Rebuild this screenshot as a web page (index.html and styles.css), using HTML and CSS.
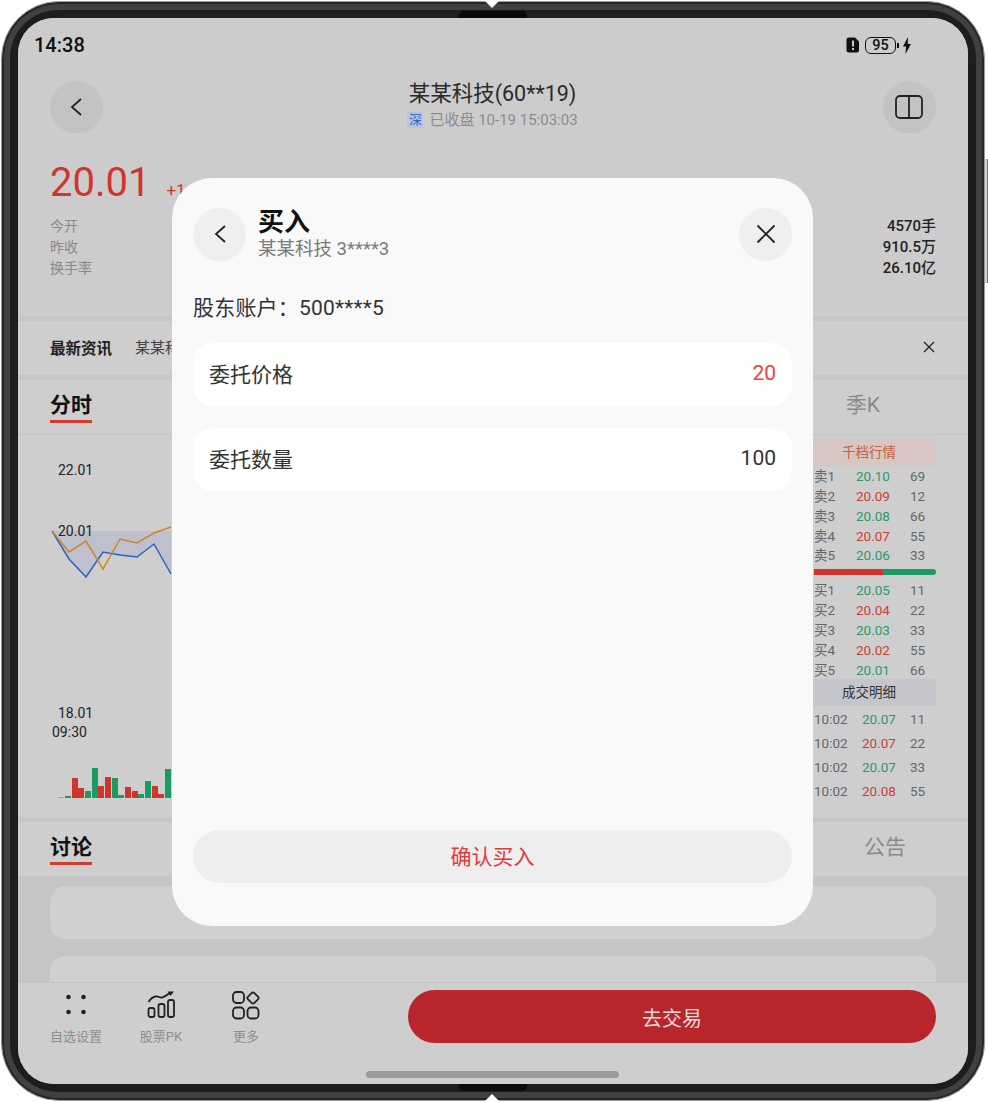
FILE: index.html
```html
<!DOCTYPE html>
<html lang="zh-CN">
<head>
    <meta charset="UTF-8">
    <meta name="viewport" content="width=device-width, initial-scale=1.0">
    <title>买入</title>
    <link rel="stylesheet" href="styles.css">
</head>
<body>
    <div class="phone">
        <span class="side-key"></span>
        <span class="hinge hinge-top"></span>
        <span class="hinge hinge-bottom"></span>
        <span class="notch notch-top"></span>
        <span class="notch notch-bottom"></span>
        <div class="bezel">
            <div class="screen">
                <div class="status">
                    <span class="time">14:38</span>
                    <div class="status-icons">
                        <svg width="14" height="16" viewBox="0 0 14 16">
                            <path d="M3 .5h6l4 4V13a2.500 2.500 0 0 1-2.500 2.500h-7.500A2.500 2.500 0 0 1 .5 13V3A2.500 2.500 0 0 1 3 .5z" fill="#111"/>
                            <path d="M7 3.500v6M7 11v2" stroke="#ccc" stroke-width="2"/>
                        </svg>
                        <span class="battery">95</span>
                        <span class="battery-nub"></span>
                        <svg class="bolt" width="8" height="17" viewBox="0 0 8 17">
                            <path d="M5 0 0 9.500h3L2.500 17 8 7H4.800z" fill="#111"/>
                        </svg>
                    </div>
                </div>

                <div class="header">
                    <button class="round-btn dim">
                        <svg width="24" height="24" viewBox="0 0 24 24"><path d="M17 4 8 12l9 8" class="icon-line"/></svg>
                    </button>
                    <div class="header-title">
                        <div class="stock-name">某某科技(60**19)</div>
                        <div class="stock-sub"><span class="market-tag">深</span>已收盘 10-19 15:03:03</div>
                    </div>
                    <button class="round-btn dim">
                        <svg width="30" height="24" viewBox="0 0 30 24">
                            <rect x="2" y="1" width="26" height="22" rx="4" class="icon-line"/>
                            <path d="M15 1v22" class="icon-line"/>
                        </svg>
                    </button>
                </div>

                <div class="quote">
                    <div class="price-line">
                        <span class="price">20.01</span>
                        <span class="change">+1.23</span>
                    </div>
                    <div class="stat-row"><span>今开</span><b>4570手</b></div>
                    <div class="stat-row"><span>昨收</span><b>910.5万</b></div>
                    <div class="stat-row"><span>换手率</span><b>26.10亿</b></div>
                </div>

                <div class="news">
                    <b>最新资讯</b>
                    <span class="news-text">某某科技发布最新公告</span>
                    <svg width="14" height="14" viewBox="0 0 14 14"><path d="M2 2l10 10M12 2 2 12" class="icon-line thin"/></svg>
                </div>

                <div class="tabs chart-tabs">
                    <span class="tab active">分时</span>
                    <span class="tab">季K</span>
                </div>

                <div class="market">
                    <svg class="chart" width="796" height="382" viewBox="18 434 796 382">
                        <polygon points="52,530 69,558 86,576 103,551 120,554 137,556 154,543 171,573 171,530" fill="#bfc0cd"/>
                        <polyline points="52,530 69,558 86,576 103,551 120,554 137,556 154,543 171,573" fill="none" stroke="#2a62c4" stroke-width="1.500"/>
                        <polyline points="52,530 69,551 86,540 103,568 120,538 137,542 154,532 171,526" fill="none" stroke="#cf8526" stroke-width="1.500"/>
                        <text x="58" y="473.500">22.01</text>
                        <text x="58" y="534.500">20.01</text>
                        <text x="58" y="716.500">18.01</text>
                        <text x="52" y="735.500">09:30</text>
                        <g fill="#1b9a62">
                            <rect x="58" y="796" width="6" height="1" fill="#7fb79c"/>
                            <rect x="65" y="795" width="6" height="2"/>
                            <rect x="85" y="790" width="6" height="7"/>
                            <rect x="92" y="767" width="6" height="30"/>
                            <rect x="112" y="777" width="6" height="20"/>
                            <rect x="118" y="794" width="6" height="3"/>
                            <rect x="138" y="793" width="6" height="4"/>
                            <rect x="145" y="780" width="6" height="17"/>
                            <rect x="165" y="768" width="6" height="29"/>
                        </g>
                        <g fill="#cf352c">
                            <rect x="72" y="777" width="6" height="20"/>
                            <rect x="78" y="787" width="6" height="10"/>
                            <rect x="98" y="785" width="6" height="12"/>
                            <rect x="105" y="776" width="6" height="21"/>
                            <rect x="125" y="786" width="6" height="11"/>
                            <rect x="132" y="790" width="6" height="7"/>
                            <rect x="152" y="785" width="6" height="12"/>
                            <rect x="158" y="793" width="6" height="4"/>
                        </g>
                    </svg>

                    <div class="book">
                        <div class="book-title orange">千档行情</div>
                        <div class="book-row"><span>卖1</span><span class="up">20.10</span><span>69</span></div>
                        <div class="book-row"><span>卖2</span><span class="down">20.09</span><span>12</span></div>
                        <div class="book-row"><span>卖3</span><span class="up">20.08</span><span>66</span></div>
                        <div class="book-row"><span>卖4</span><span class="down">20.07</span><span>55</span></div>
                        <div class="book-row"><span>卖5</span><span class="up">20.06</span><span>33</span></div>
                        <div class="book-bar"><span class="book-bar-red"></span></div>
                        <div class="book-row"><span>买1</span><span class="up">20.05</span><span>11</span></div>
                        <div class="book-row"><span>买2</span><span class="down">20.04</span><span>22</span></div>
                        <div class="book-row"><span>买3</span><span class="up">20.03</span><span>33</span></div>
                        <div class="book-row"><span>买4</span><span class="down">20.02</span><span>55</span></div>
                        <div class="book-row"><span>买5</span><span class="up">20.01</span><span>66</span></div>
                        <div class="book-title grey">成交明细</div>
                        <div class="deals">
                            <div class="deal-row"><span>10:02</span><span class="up">20.07</span><span>11</span></div>
                            <div class="deal-row"><span>10:02</span><span class="down">20.07</span><span>22</span></div>
                            <div class="deal-row"><span>10:02</span><span class="up">20.07</span><span>33</span></div>
                            <div class="deal-row"><span>10:02</span><span class="down">20.08</span><span>55</span></div>
                        </div>
                    </div>
                </div>

                <div class="tabs talk-tabs">
                    <span class="tab active">讨论</span>
                    <span class="tab">公告</span>
                </div>

                <div class="talk-list">
                    <div class="talk-card"></div>
                    <div class="talk-card"></div>
                </div>

                <div class="bottom-bar">
                    <div class="tool tool-first">
                        <svg width="30" height="30" viewBox="0 0 30 30">
                            <circle cx="7.500" cy="7" r="2.300"/><circle cx="22.500" cy="7" r="2.300"/>
                            <circle cx="7.500" cy="22" r="2.300"/><circle cx="22.500" cy="22" r="2.300"/>
                        </svg>
                        <span>自选设置</span>
                    </div>
                    <div class="tool">
                        <svg width="30" height="30" viewBox="0 0 30 30">
                            <rect x="2.500" y="18" width="6" height="9" rx="2" class="icon-line"/>
                            <rect x="12.500" y="14" width="6" height="13" rx="2" class="icon-line"/>
                            <rect x="22" y="10" width="6" height="17" rx="2" class="icon-line"/>
                            <path d="M2.500 12c2-3 4-5 7-5.500 3-.5 4 1.500 6.500 1 2.500-.5 5-2.500 8-4.500" class="icon-line"/>
                            <path d="M21.500 1.500H28L24.500 6z" fill="#222"/>
                        </svg>
                        <span>股票PK</span>
                    </div>
                    <div class="tool">
                        <svg width="30" height="30" viewBox="0 0 30 30">
                            <rect x="2" y="2" width="11" height="11" rx="3.500" class="icon-line"/>
                            <rect x="17.500" y="3.500" width="9" height="9" rx="2" transform="rotate(45 22 8)" class="icon-line"/>
                            <rect x="2" y="17.500" width="11" height="11" rx="3.500" class="icon-line"/>
                            <rect x="16.500" y="17.500" width="11" height="11" rx="3.500" class="icon-line"/>
                        </svg>
                        <span>更多</span>
                    </div>
                    <button class="trade-btn">去交易</button>
                </div>
                <div class="home-bar"></div>

                <div class="modal">
                    <div class="modal-head">
                        <button class="round-btn light">
                            <svg width="24" height="24" viewBox="0 0 24 24"><path d="M17 4 8 12l9 8" class="icon-line"/></svg>
                        </button>
                        <div class="modal-title">
                            <h2>买入</h2>
                            <p>某某科技 3****3</p>
                        </div>
                        <button class="round-btn light">
                            <svg width="24" height="24" viewBox="0 0 24 24"><path d="M3.500 3.500l17 17M20.500 3.500l-17 17" class="icon-line"/></svg>
                        </button>
                    </div>
                    <div class="account">股东账户：500****5</div>
                    <div class="field"><span>委托价格</span><span class="field-red">20</span></div>
                    <div class="field"><span>委托数量</span><span>100</span></div>
                    <button class="confirm-btn">确认买入</button>
                </div>
            </div>
        </div>
    </div>
</body>
</html>
```

FILE: styles.css
```css
* {
    box-sizing: border-box;
}

body {
    margin: 0;
    background: #fff;
    font-family: Roboto, "Noto Sans CJK SC", sans-serif;
    color: #222;
}

button {
    border: none;
    padding: 0;
    font: inherit;
}

.icon-line {
    fill: none;
    stroke: #222;
    stroke-width: 1.800;
}

.icon-line.thin {
    stroke-width: 1.300;
}

/* device frame */
.phone {
    position: relative;
    width: 984px;
    height: 1100px;
    margin: 1px 0 0 1px;
    padding: 8px;
    border: 1px solid #9a9a9a;
    border-radius: 58px;
    background: #404040;
    box-shadow: inset 0 0 0 2px #262626;
}

.bezel {
    height: 100%;
    padding: 8px;
    border-radius: 48px;
    background: #1d1d1d;
}

.side-key {
    position: absolute;
    top: 157px;
    right: -4px;
    width: 3px;
    height: 124px;
    border-right: 1px solid #777;
    background: #cfcfcf;
}

.hinge {
    position: absolute;
    left: 457px;
    width: 68px;
    height: 7px;
    background: #0a0a0a;
}

.hinge-top {
    top: 9px;
    border-radius: 5px 5px 0 0;
}

.hinge-bottom {
    bottom: 9px;
    border-radius: 0 0 5px 5px;
}

.notch {
    position: absolute;
    left: 483px;
    width: 0;
    height: 0;
    border-left: 7px solid transparent;
    border-right: 7px solid transparent;
}

.notch-top {
    top: -1px;
    border-top: 7px solid #fff;
}

.notch-bottom {
    bottom: -1px;
    border-bottom: 7px solid #fff;
}

.screen {
    position: relative;
    display: flex;
    flex-direction: column;
    height: 100%;
    overflow: hidden;
    border-radius: 36px;
    background: #cecece;
}

/* status bar */
.status {
    display: flex;
    justify-content: space-between;
    flex: none;
    height: 63px;
    padding: 14px 57px 0 16px;
    background: #cccccc;
}

.time {
    font-size: 20px;
    line-height: 26px;
    font-weight: 500;
    color: #111;
}

.status-icons {
    display: flex;
    align-items: center;
    height: 26px;
}

.battery {
    width: 31px;
    height: 17px;
    margin-left: 5px;
    border: 1.500px solid #111;
    border-radius: 6px;
    font-size: 14.500px;
    line-height: 15px;
    font-weight: 500;
    text-align: center;
    color: #111;
}

.battery-nub {
    width: 2px;
    height: 5px;
    margin-left: 1px;
    background: #111;
}

.bolt {
    margin-left: 4px;
}

/* header */
.header {
    display: flex;
    justify-content: space-between;
    align-items: center;
    flex: none;
    height: 52px;
    padding: 0 32.500px 0 31.500px;
    background: #cccccc;
}

.round-btn {
    display: flex;
    justify-content: center;
    align-items: center;
    flex: none;
    width: 53px;
    height: 53px;
    border-radius: 50%;
}

.round-btn.dim {
    background: #c3c3c3;
}

.round-btn.light {
    background: #efefef;
}

.header-title {
    margin-top: -3px;
    text-align: center;
}

.stock-name {
    font-size: 21.500px;
    line-height: 26px;
    color: #2a2a2a;
}

.stock-sub {
    display: flex;
    justify-content: center;
    align-items: center;
    margin-top: 2px;
    font-size: 15px;
    line-height: 22px;
    color: #8c8c8c;
}

.market-tag {
    width: 16px;
    height: 16px;
    margin-right: 6px;
    background: #bcc5d8;
    font-size: 13px;
    line-height: 16px;
    color: #2b62c9;
}

/* quote */
.quote {
    flex: none;
    height: 183px;
    padding: 26px 32px 0;
    background: #cccccc;
}

.price-line {
    display: flex;
    align-items: baseline;
    height: 48px;
    margin-bottom: 9px;
    color: #cf352c;
}

.price {
    font-size: 40px;
    line-height: 48px;
}

.change {
    margin-left: 16px;
    font-size: 17px;
}

.stat-row {
    display: flex;
    justify-content: space-between;
    height: 21px;
    font-size: 14px;
    line-height: 21px;
    color: #8a8a8a;
}

.stat-row b {
    font-size: 15px;
    font-weight: 500;
    color: #222;
}

/* news */
.news {
    display: flex;
    align-items: center;
    flex: none;
    height: 59px;
    padding: 0 32px 3px;
    border-top: 5px solid #c6c6c6;
    font-size: 15px;
}

.news b {
    width: 85px;
    font-size: 15.500px;
    font-weight: 700;
}

.news-text {
    flex: 1;
    color: #444;
}

/* tabs */
.tabs {
    display: flex;
    justify-content: space-between;
    flex: none;
    padding: 0 88px 0 32px;
    border-top: 5px solid #c6c6c6;
}

.chart-tabs {
    height: 60px;
    border-bottom: 1px solid #c4c4c4;
}

.talk-tabs {
    height: 59px;
    padding-right: 62px;
}

.tab {
    height: 34px;
    margin-top: 9px;
    font-size: 21px;
    line-height: 33px;
    color: #8b8b8b;
}

.tab.active {
    border-bottom: 3px solid #d33a30;
    font-weight: 700;
    color: #111;
}

/* chart + order book */
.market {
    display: flex;
    flex: none;
    height: 382px;
}

.chart {
    display: block;
    flex: none;
}

.chart text {
    font-size: 14px;
    fill: #222;
}

.book {
    flex: none;
    width: 154px;
    padding: 4px 32px 0 0;
    font-size: 13.500px;
    color: #666;
}

.book-title {
    height: 27px;
    margin-left: -12px;
    font-size: 13.500px;
    line-height: 26px;
    text-align: center;
}

.book-title.orange {
    margin-bottom: 1px;
    background: #d8c6c2;
    color: #c2613f;
}

.book-title.grey {
    margin-top: -1px;
    background: #c5c6cb;
    color: #333;
}

.book-row {
    display: grid;
    grid-template-columns: 42px 54px auto;
    height: 19.850px;
    line-height: 19.850px;
}

.book-bar {
    height: 6px;
    margin: 3px 0 6px;
    overflow: hidden;
    border-radius: 0 3px 3px 0;
    background: #1b9a62;
}

.book-bar-red {
    display: block;
    width: 69px;
    height: 100%;
    background: #cf352c;
}

.deals {
    margin-top: 1px;
}

.deal-row {
    display: grid;
    grid-template-columns: 48px 48px auto;
    height: 24px;
    line-height: 24px;
}

.up {
    color: #2a9a6a;
}

.down {
    color: #cc3f36;
}

/* discussion */
.talk-list {
    flex: 1;
    display: flex;
    flex-direction: column;
    gap: 17px;
    min-height: 0;
    overflow: hidden;
    padding: 10px 32px 0;
    background: #c4c5c7;
}

.talk-card {
    flex: none;
    height: 53px;
    border-radius: 16px;
    background: #d0d0d0;
}

/* bottom bar */
.bottom-bar {
    display: flex;
    align-items: flex-start;
    flex: none;
    height: 102px;
    padding: 7px 32px 0 32px;
    border-top: 1px solid #c4c4c4;
    background: #cecece;
}

.tool {
    display: flex;
    flex-direction: column;
    align-items: center;
    width: 52px;
    margin-left: 33px;
    font-size: 13px;
    line-height: 20px;
    color: #8e8e8e;
    white-space: nowrap;
}

.tool svg {
    display: block;
    margin-bottom: 7px;
}

.tool circle {
    fill: #222;
}

.tool-first {
    margin-left: 0;
}

.trade-btn {
    width: 528px;
    height: 53px;
    margin-left: auto;
    padding-top: 1px;
    border-radius: 27px;
    background: #b8262c;
    font-size: 20px;
    color: #ecd9d9;
}

.home-bar {
    position: absolute;
    left: 348px;
    bottom: 6px;
    width: 253px;
    height: 7px;
    border-radius: 4px;
    background: #9b9b9b;
}

/* buy dialog */
.modal {
    position: absolute;
    top: 160px;
    left: 154px;
    display: flex;
    flex-direction: column;
    width: 641px;
    height: 748px;
    padding: 29px 21px 43px;
    border-radius: 40px;
    background: #f9f9f9;
}

.modal-head {
    display: flex;
    align-items: center;
}

.modal-title {
    flex: 1;
    margin-left: 12px;
}

.modal-title h2 {
    margin: 0;
    font-size: 26px;
    line-height: 31px;
    color: #111;
}

.modal-title p {
    margin: 0;
    font-size: 18.500px;
    line-height: 23px;
    color: #7a7a7a;
}

.account {
    margin: 33px 0 21px;
    font-size: 21px;
    line-height: 28px;
    letter-spacing: .2px;
    color: #333;
}

.field {
    display: flex;
    justify-content: space-between;
    align-items: center;
    height: 63px;
    margin-bottom: 22px;
    padding: 0 16px 3px;
    border-radius: 20px;
    background: #fff;
    font-size: 21px;
    color: #333;
}

.field-red {
    color: #f0403c;
}

.confirm-btn {
    height: 53px;
    margin-top: auto;
    padding-bottom: 4px;
    border-radius: 27px;
    background: #eeeeee;
    font-size: 21px;
    color: #e03a3a;
}
```
